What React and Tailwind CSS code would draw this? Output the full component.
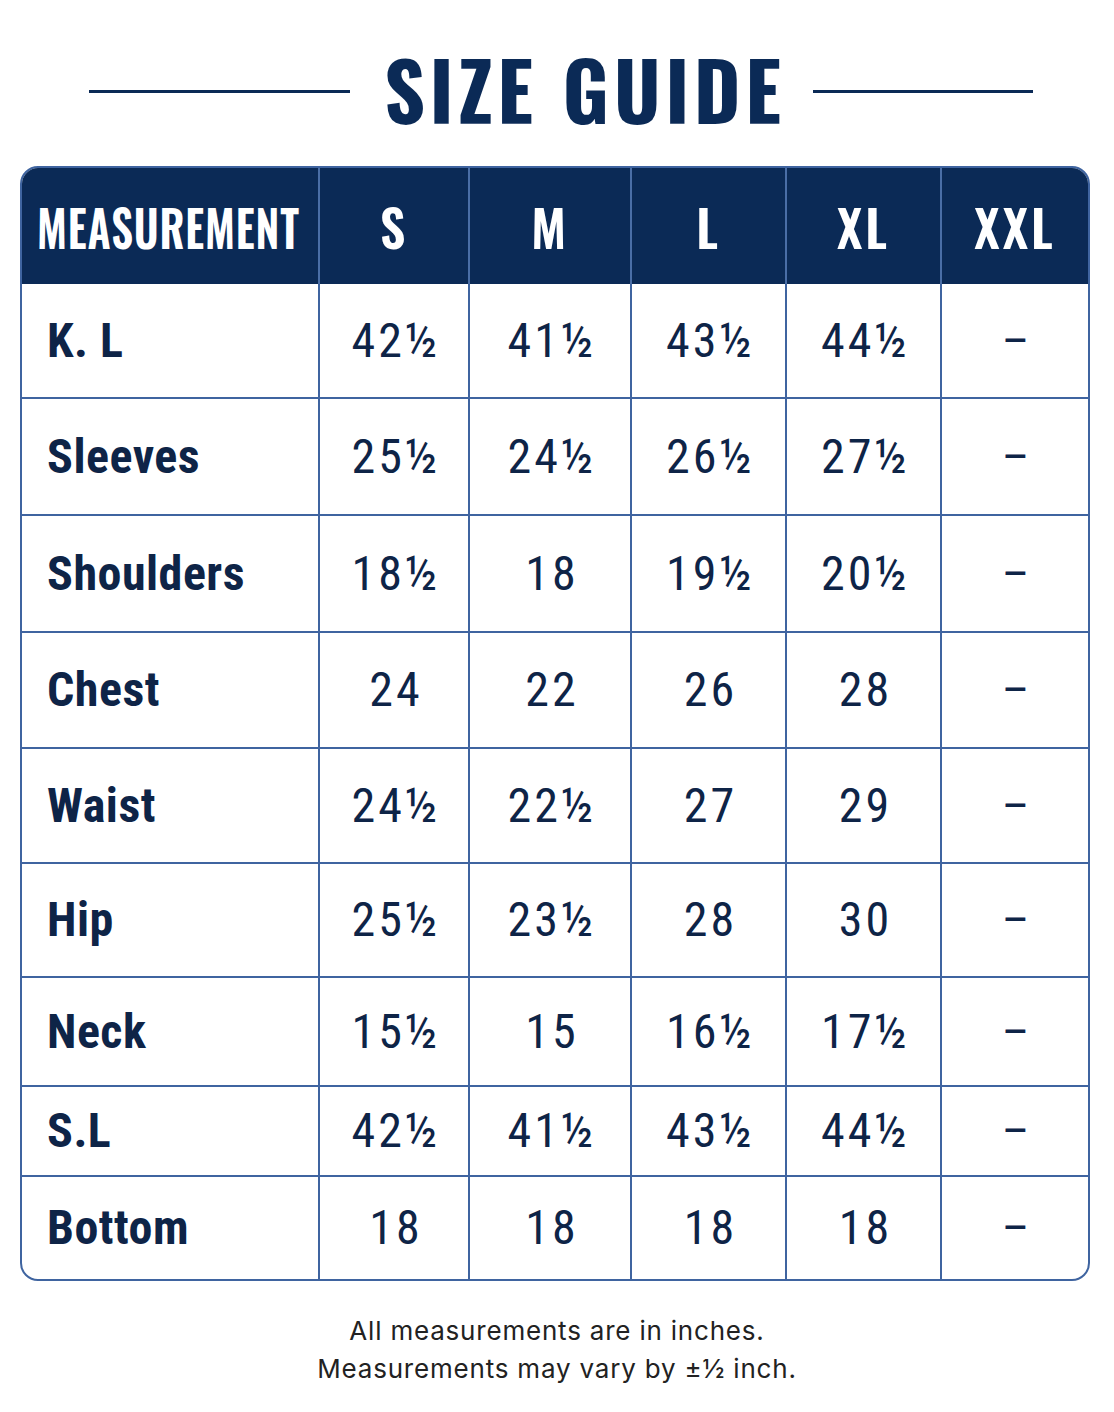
const COND = "font-['Oswald','Roboto_Condensed',sans-serif]"
const BODY = "font-['Roboto_Condensed','Oswald',sans-serif]"

const sizes = ["S", "M", "L", "XL", "XXL"]

const rows = [
  { label: "K. L", h: "h-[115px]", vals: ["42½", "41½", "43½", "44½", "–"] },
  { label: "Sleeves", h: "h-[117px]", vals: ["25½", "24½", "26½", "27½", "–"] },
  { label: "Shoulders", h: "h-[117px]", vals: ["18½", "18", "19½", "20½", "–"] },
  { label: "Chest", h: "h-[116px]", vals: ["24", "22", "26", "28", "–"] },
  { label: "Waist", h: "h-[115px]", vals: ["24½", "22½", "27", "29", "–"] },
  { label: "Hip", h: "h-[114px]", vals: ["25½", "23½", "28", "30", "–"] },
  { label: "Neck", h: "h-[109px]", vals: ["15½", "15", "16½", "17½", "–"] },
  { label: "S.L", h: "h-[90px]", vals: ["42½", "41½", "43½", "44½", "–"] },
  { label: "Bottom", h: "h-[102px]", vals: ["18", "18", "18", "18", "–"] },
]

/**
 * Header row: navy band with size columns
 */
function HeaderRow() {
  return (
    <>
      <div className={`h-[116px] bg-[#0b2a56] border-r-2 border-[#4a6ea6] flex items-center pl-[15px] overflow-hidden ${COND}`}>
        <span className="inline-block text-[50px] font-semibold text-white tracking-[1px] leading-none scale-x-[0.86] origin-left whitespace-nowrap">MEASUREMENT</span>
      </div>
      {sizes.map((s, i) => (
        <div
          key={s}
          className={`h-[116px] bg-[#0b2a56] flex items-center justify-center ${i < sizes.length - 1 ? "border-r-2 border-[#4a6ea6]" : ""} ${COND}`}
        >
          <span className="text-[50px] font-semibold text-white tracking-[3px] leading-none">{s}</span>
        </div>
      ))}
    </>
  )
}

function BodyRow({ row, last }) {
  const bottom = last ? "" : "border-b-2"
  return (
    <>
      <div className={`${row.h} ${bottom} border-r-2 border-[#3f64a0] flex items-center pl-[25px] ${BODY}`}>
        <span className="text-[48px] font-bold text-[#0e2447] leading-none tracking-[0.5px]">{row.label}</span>
      </div>
      {row.vals.map((v, i) => (
        <div
          key={i}
          className={`${row.h} ${bottom} ${i < row.vals.length - 1 ? "border-r-2" : ""} border-[#3f64a0] flex items-center justify-center ${BODY}`}
        >
          <span className="text-[48px] font-normal text-[#0e2447] leading-none tracking-[3px] pl-[4px]">{v}</span>
        </div>
      ))}
    </>
  )
}

export default function App() {
  return (
    <div className="w-[1114px] h-[1412px] bg-white">
      {/* Title with rules */}
      <div className="h-[166px] flex items-start pl-[89px] pt-[42px]">
        <div className="flex items-center">
          <div className="w-[261px] h-[3px] bg-[#0b2a56] mr-[34px] mt-[6px]" />
          <h1 className={`text-[80px] font-bold text-[#0b2a56] leading-[92px] tracking-[4.5px] ${COND}`}>SIZE GUIDE</h1>
          <div className="w-[220px] h-[3px] bg-[#0b2a56] ml-[28px] mt-[6px]" />
        </div>
      </div>

      {/* Table */}
      <div className="ml-[20px] w-[1070px] border-2 border-[#3f64a0] rounded-[18px] overflow-hidden">
        <div className="grid grid-cols-[298px_150px_162px_155px_155px_146px]">
          <HeaderRow />
          {rows.map((r, i) => (
            <BodyRow key={r.label} row={r} last={i === rows.length - 1} />
          ))}
        </div>
      </div>

      {/* Footnote */}
      <div className="pt-[31px] text-center font-['Inter',sans-serif] text-[26px] leading-[38px] tracking-[0.8px] text-[#222]">
        <p>All measurements are in inches.</p>
        <p>Measurements may vary by ±½ inch.</p>
      </div>
    </div>
  )
}
